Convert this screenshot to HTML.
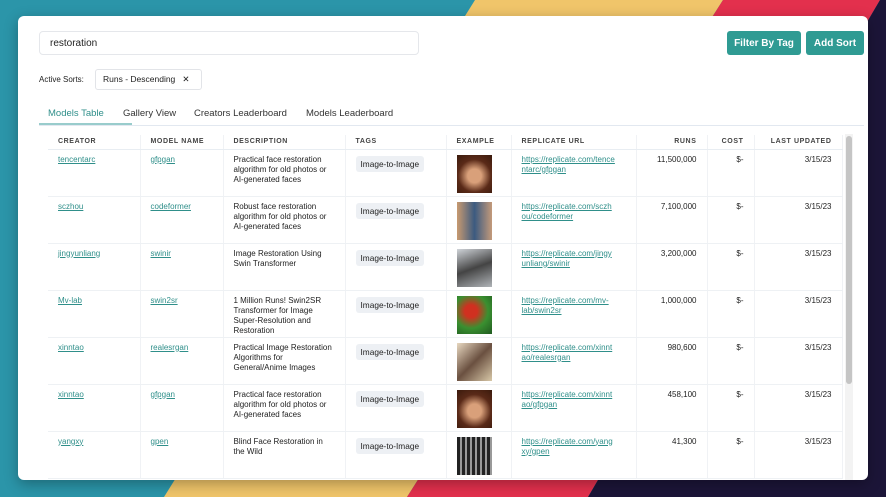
<!DOCTYPE html>
<html><head><style>
*{box-sizing:border-box;margin:0;padding:0}
body{width:886px;height:497px;overflow:hidden;position:relative;font-family:"Liberation Sans",sans-serif;background:#2a93a8}
.bg{position:absolute;inset:0}
.card{position:absolute;left:18px;top:16px;width:850px;height:464px;background:#fff;border-radius:6px;overflow:hidden;box-shadow:0 4px 14px rgba(0,0,0,.3)}
.search{position:absolute;left:21px;top:15px;width:380px;height:24px;border:1px solid #e5e7eb;border-radius:4px;font-size:10px;color:#222;padding:6px 10px}
.btn{position:absolute;top:15px;height:24px;background:#2f9b93;color:#fff;font-size:10px;font-weight:bold;border-radius:3px;display:flex;align-items:center;justify-content:center}
.as{position:absolute;left:21px;top:59px;font-size:8px;color:#222}
.chip{position:absolute;left:77px;top:53px;width:107px;height:21px;border:1px solid #e2e4e8;border-radius:3px;font-size:8.5px;line-height:19px;padding-left:7px;color:#222}
.tabs{position:absolute;left:21px;top:90px;width:825px;height:20px;border-bottom:1px solid #e2e8f0;font-size:9.5px;color:#333}
.tabs span{position:absolute;top:2px}
.tabs .act{color:#2f8f8a}
.ul{position:absolute;left:0;top:17px;width:93px;height:2px;background:#9cc}
table{position:absolute;left:30px;top:119px;border-collapse:collapse;font-size:8px;color:#222;table-layout:fixed}
th{height:14px;font-size:7px;letter-spacing:.6px;color:#444;text-align:left;font-weight:bold;padding:0 10px;border-right:1px solid #f0f2f5;border-bottom:1px solid #e8edf2}
td{height:47px;vertical-align:top;padding:5px 10px 0;border-right:1px solid #f0f2f5;border-bottom:1px solid #eef1f4;line-height:10px;overflow:hidden}
a{color:#2f8f8a;text-decoration:underline}
.r{text-align:right}
.tag{display:inline-block;background:#edf0f4;border-radius:3px;padding:3px 5px;font-size:8.3px;margin-top:1px}
.img{width:35px;height:38px}
.sb{position:absolute;left:827px;top:118px;width:8px;height:346px;background:#f3f3f3}
.sb div{position:absolute;left:1px;top:2px;width:6px;height:248px;background:#c5c5c5;border-radius:3px}
</style></head><body>
<svg class="bg" width="886" height="497"><rect width="886" height="497" fill="#2b95a9"/>
<polygon points="475,0 723,0 407,497 164,497" fill="#f0c56a"/>
<polygon points="723,0 880,0 588,497 407,497" fill="#e3304d"/>
<polygon points="880,0 886,0 886,497 588,497" fill="#1c1538"/>
</svg>
<div class="card">
<div class="search">restoration</div>
<div class="btn" style="left:709px;width:74px">Filter By Tag</div>
<div class="btn" style="left:788px;width:58px">Add Sort</div>
<div class="as">Active Sorts:</div>
<div class="chip">Runs - Descending &nbsp;&nbsp;✕</div>
<div class="tabs"><span class="act" style="left:9px">Models Table</span><span style="left:84px">Gallery View</span><span style="left:155px">Creators Leaderboard</span><span style="left:267px">Models Leaderboard</span><div class="ul"></div></div>
<table>
<colgroup><col style="width:92px"><col style="width:83px"><col style="width:122px"><col style="width:101px"><col style="width:65px"><col style="width:125px"><col style="width:71px"><col style="width:47px"><col style="width:88px"></colgroup>
<tr><th>CREATOR</th><th>MODEL NAME</th><th>DESCRIPTION</th><th>TAGS</th><th>EXAMPLE</th><th>REPLICATE URL</th><th class="r">RUNS</th><th class="r">COST</th><th class="r">LAST UPDATED</th></tr>
<tr><td><a>tencentarc</a></td><td><a>gfpgan</a></td><td>Practical face restoration algorithm for old photos or AI-generated faces</td><td><span class="tag">Image-to-Image</span></td><td><div class="img" style="background:radial-gradient(circle at 50% 55%,#d9a07a 25%,#5a2a18 60%,#3a1a0c)"></div></td><td><a>https://replicate.com/tence ntarc/gfpgan</a></td><td class="r">11,500,000</td><td class="r">$-</td><td class="r">3/15/23</td></tr>
<tr><td><a>sczhou</a></td><td><a>codeformer</a></td><td>Robust face restoration algorithm for old photos or AI-generated faces</td><td><span class="tag">Image-to-Image</span></td><td><div class="img" style="background:linear-gradient(90deg,#c89a70,#3b5a80 50%,#c49a7a);"></div></td><td><a>https://replicate.com/sczh ou/codeformer</a></td><td class="r">7,100,000</td><td class="r">$-</td><td class="r">3/15/23</td></tr>
<tr><td><a>jingyunliang</a></td><td><a>swinir</a></td><td>Image Restoration Using Swin Transformer</td><td><span class="tag">Image-to-Image</span></td><td><div class="img" style="background:linear-gradient(160deg,#cfd3d8,#444 50%,#b0b4b8)"></div></td><td><a>https://replicate.com/jingy unliang/swinir</a></td><td class="r">3,200,000</td><td class="r">$-</td><td class="r">3/15/23</td></tr>
<tr><td><a>Mv-lab</a></td><td><a>swin2sr</a></td><td>1 Million Runs! Swin2SR Transformer for Image Super-Resolution and Restoration</td><td><span class="tag">Image-to-Image</span></td><td><div class="img" style="background:radial-gradient(circle at 40% 40%,#d03020 20%,#3a9030 55%,#205a20)"></div></td><td><a>https://replicate.com/mv-lab/swin2sr</a></td><td class="r">1,000,000</td><td class="r">$-</td><td class="r">3/15/23</td></tr>
<tr><td><a>xinntao</a></td><td><a>realesrgan</a></td><td>Practical Image Restoration Algorithms for General/Anime Images</td><td><span class="tag">Image-to-Image</span></td><td><div class="img" style="background:linear-gradient(135deg,#e8d8c0,#6a5040 50%,#d8c8a8)"></div></td><td><a>https://replicate.com/xinnt ao/realesrgan</a></td><td class="r">980,600</td><td class="r">$-</td><td class="r">3/15/23</td></tr>
<tr><td><a>xinntao</a></td><td><a>gfpgan</a></td><td>Practical face restoration algorithm for old photos or AI-generated faces</td><td><span class="tag">Image-to-Image</span></td><td><div class="img" style="background:radial-gradient(circle at 50% 55%,#d9a07a 25%,#5a2a18 60%,#3a1a0c)"></div></td><td><a>https://replicate.com/xinnt ao/gfpgan</a></td><td class="r">458,100</td><td class="r">$-</td><td class="r">3/15/23</td></tr>
<tr><td><a>yangxy</a></td><td><a>gpen</a></td><td>Blind Face Restoration in the Wild</td><td><span class="tag">Image-to-Image</span></td><td><div class="img" style="background:repeating-linear-gradient(90deg,#222 0 3px,#999 3px 5px)"></div></td><td><a>https://replicate.com/yang xy/gpen</a></td><td class="r">41,300</td><td class="r">$-</td><td class="r">3/15/23</td></tr>
</table>
<div class="sb"><div></div></div>
</div>
</body></html>
